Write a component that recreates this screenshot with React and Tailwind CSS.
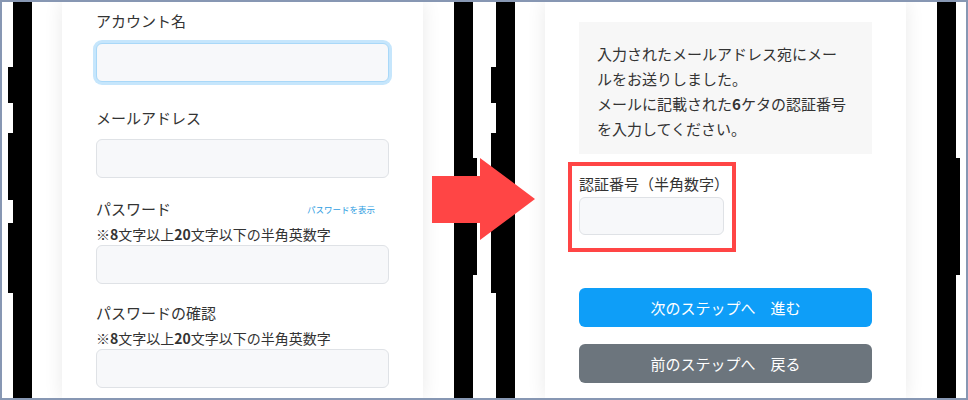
import React from 'react'

// black phone bezel strips; each entry is [height, has side button]
const LEFT_SIDE = [[65, false], [36, true], [30, false], [67, true], [23, false], [70, true]]
const RIGHT_SIDE = [[156, false], [117, true]]

const LeftBezel = () => (
    <div className="w-[24px] h-full shrink-0 flex flex-col">
        {LEFT_SIDE.map(([h, btn], i) => (
            <div key={i} className={btn ? 'bg-black' : 'bg-black ml-[5px]'} style={{ height: h }} />
        ))}
        <div className="flex-1 bg-black ml-[5px]" />
    </div>
)

const RightBezel = () => (
    <div className="w-[23px] h-full shrink-0 flex flex-col">
        {RIGHT_SIDE.map(([h, btn], i) => (
            <div key={i} className={btn ? 'bg-black' : 'bg-black mr-[4px]'} style={{ height: h }} />
        ))}
        <div className="flex-1 bg-black mr-[4px]" />
    </div>
)

const Field = ({ focused, className = '' }) => (
    <input
        type="text"
        className={
            focused
                ? 'block w-full h-[39px] rounded-[6px] border border-[#a9d8f8] bg-[#f7f8fa] ring-[3px] ring-[#c6e6fc] outline-none ' + className
                : 'block w-full h-[39px] rounded-[6px] border border-[#dfe2e6] bg-[#f7f8fa] outline-none ' + className
        }
    />
)

const Screen = ({ children }) => (
    <div className="w-[422px] h-full shrink-0 pl-[30px] bg-white">
        <div className="w-[361px] h-full bg-white shadow-[0_0_18px_rgba(0,0,0,0.09)] overflow-hidden">
            {children}
        </div>
    </div>
)

const SignupForm = () => (
    <div className="px-[34px] pt-[9px] text-[#333] text-[15px] leading-[20px]">
        <p>アカウント名</p>
        <Field focused className="mt-[12px]" />

        <p className="mt-[26px]">メールアドレス</p>
        <Field className="mt-[11px]" />

        <div className="mt-[21px] flex items-center justify-between pr-[14px]">
            <span>パスワード</span>
            <span className="text-[8.5px] leading-[12px] text-[#2f9ee2]">パスワードを表示</span>
        </div>
        <p className="mt-[6px] text-[14px] leading-[18px]">※<b>8</b>文字以上<b>20</b>文字以下の半角英数字</p>
        <Field className="mt-[2px]" />

        <p className="mt-[19px]">パスワードの確認</p>
        <p className="mt-[6px] text-[14px] leading-[18px]">※<b>8</b>文字以上<b>20</b>文字以下の半角英数字</p>
        <Field className="mt-[2px]" />
    </div>
)

const VerifyForm = () => (
    <div className="px-[34px] pt-[20px] text-[#333] text-[15px]">
        <div className="h-[132px] bg-[#f7f7f7] pl-[18px] pt-[19px] leading-[25px] whitespace-nowrap">
            入力されたメールアドレス宛にメー<br />
            ルをお送りしました。<br />
            メールに記載された<b>6</b>ケタの認証番号<br />
            を入力してください。
        </div>

        <div className="mt-[8px] -ml-[11px] w-[168px] border-4 border-[#ff4545] pl-[7px] pr-[8px] pt-[8px] pb-[13px]">
            <p className="leading-[20px]">認証番号（半角数字）</p>
            <input type="text" className="block mt-[3px] w-full h-[38px] rounded-[6px] border border-[#dfe2e6] bg-[#f7f8fa] outline-none" />
        </div>

        <button className="mt-[36px] w-full h-[39px] rounded-[6px] bg-[#0e9ef8] text-white text-[15px] leading-[20px]">
            次のステップへ　進む
        </button>
        <button className="mt-[17px] w-full h-[39px] rounded-[6px] bg-[#6c757d] text-white text-[15px] leading-[20px]">
            前のステップへ　戻る
        </button>
    </div>
)

export default function App() {
    return (
        <div className="relative w-[968px] h-[400px] border-2 border-[#8797b3] bg-white overflow-hidden flex font-['Noto_Sans_CJK_JP','Noto_Sans',sans-serif]">
            <div className="w-[6px] shrink-0" />
            <LeftBezel />
            <Screen>
                <SignupForm />
            </Screen>
            <RightBezel />
            <div className="w-[14px] shrink-0" />
            <LeftBezel />
            <Screen>
                <VerifyForm />
            </Screen>
            <RightBezel />
            <div className="w-[6px] shrink-0" />

            {/* big red arrow between the two phones */}
            <svg className="absolute left-[430px] top-[156px]" width="103" height="82" viewBox="0 0 103 82">
                <polygon points="0,18 48,18 48,0 103,41 48,82 48,65 0,65" fill="#ff4545" />
            </svg>
        </div>
    )
}
